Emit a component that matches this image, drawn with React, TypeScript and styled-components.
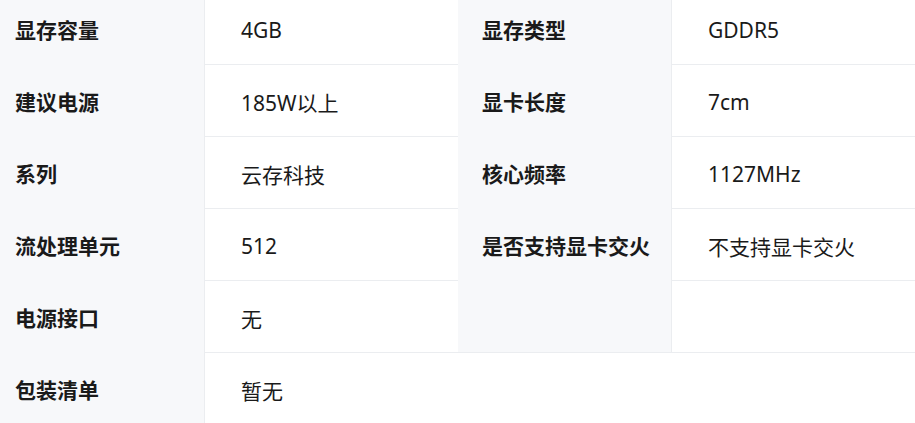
import styled, { createGlobalStyle } from "styled-components";

type Spec = [string, string];

const rows: { left: Spec; right?: Spec; wide?: boolean }[] = [
    { left: ['显存容量', '4GB'], right: ['显存类型', 'GDDR5'] },
    { left: ['建议电源', '185W以上'], right: ['显卡长度', '7cm'] },
    { left: ['系列', '云存科技'], right: ['核心频率', '1127MHz'] },
    { left: ['流处理单元', '512'], right: ['是否支持显卡交火', '不支持显卡交火'] },
    { left: ['电源接口', '无'], right: ['', ''] },
    { left: ['包装清单', '暂无'], wide: true },
];

const GlobalStyle = createGlobalStyle`
    html, body {
        margin: 0;
        padding: 0;
        background: #fff;
        overflow: hidden;
    }
    body {
        font-family: "Noto Sans", "Noto Sans CJK SC", sans-serif;
        color: #1a1a1a;
    }
`;

const App = () => {
    return (
        <>
            <GlobalStyle />
            <Table>
                {rows.map((row, i) => (
                    <Row key={i}>
                        <Label $pad={15}>{row.left[0]}</Label>
                        <Value $wide={row.wide}>{row.left[1]}</Value>
                        {row.right && (
                            <>
                                <Label $pad={24}>{row.right[0]}</Label>
                                <Value>{row.right[1]}</Value>
                            </>
                        )}
                    </Row>
                ))}
            </Table>
        </>
    );
};

const Table = styled.div`
    width: 915px;
    margin-top: -8px;
    display: flex;
    flex-direction: column;
`;

const Row = styled.div`
    display: grid;
    grid-template-columns: 205px 253px 214px 243px;
    height: 72px;
`;

const Label = styled.div<{ $pad: number }>`
    box-sizing: border-box;
    display: flex;
    align-items: center;
    padding: 2px 0 0 ${({ $pad }) => $pad}px;
    background-color: #f7f8fa;
    border-right: 1px solid #ebedf0;
    font-size: 21px;
    font-weight: 700;
    color: #1a1a1a;
    white-space: nowrap;
`;

const Value = styled.div<{ $wide?: boolean }>`
    box-sizing: border-box;
    display: flex;
    align-items: center;
    padding: 2px 0 0 36px;
    border-top: 1px solid #ebedf0;
    font-size: 21px;
    color: #1a1a1a;
    white-space: nowrap;
    ${({ $wide }) => $wide && 'grid-column: 2 / 5;'}
`;

export default App;
